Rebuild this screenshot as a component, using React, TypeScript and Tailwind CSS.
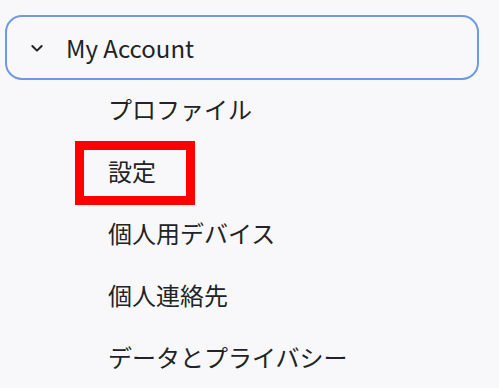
import React from "react";

const items = ["プロファイル", "設定", "個人用デバイス", "個人連絡先", "データとプライバシー"];

export default function App() {
  return (
    <div
      className="min-h-screen w-full bg-[#f8f8fb] pt-[15px] pl-[5px] text-[#222326]"
      style={{ fontFamily: '"Noto Sans CJK JP", "Noto Sans", sans-serif' }}
    >
      <div className="flex h-[65px] w-[474px] items-center rounded-[17px] border-2 border-[#6f9ae0]">
        <svg
          className="ml-[22px] h-[16px] w-[16px]"
          viewBox="0 0 24 24"
          fill="none"
          stroke="#222326"
          strokeWidth="3"
          strokeLinecap="round"
          strokeLinejoin="round"
        >
          <path d="M5 9l7 7 7-7" />
        </svg>
        <span className="ml-[21px] text-[24px] leading-none">My Account</span>
      </div>
      <ul className="flex flex-col">
        {items.map((t, i) => (
          <li key={t}>
            <div
              className={
                i === 1
                  ? "ml-[70px] -my-[1px] flex h-[64px] w-[120px] items-center border-[9px] border-[#ff0000] px-[24px] pb-[4px] text-[24px] leading-none"
                  : "ml-[70px] flex h-[62px] items-center border-[9px] border-transparent px-[24px] pb-[4px] text-[24px] leading-none"
              }
            >
              {t}
            </div>
          </li>
        ))}
      </ul>
    </div>
  );
}
